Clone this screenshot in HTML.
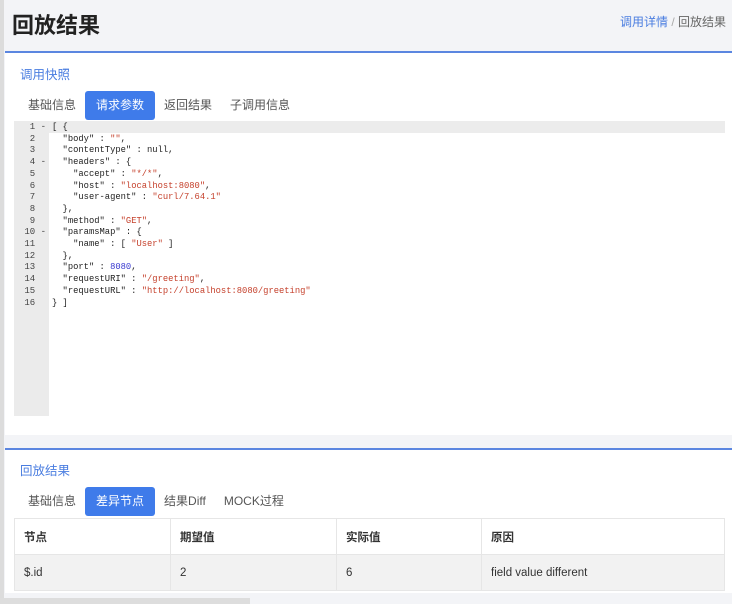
<!DOCTYPE html>
<html><head><meta charset="utf-8"><style>
*{margin:0;padding:0;box-sizing:border-box}
body{width:732px;height:604px;background:#f3f4f7;font-family:"Liberation Sans","Noto Sans CJK SC",sans-serif;position:relative;overflow:hidden;color:#333}
.lstrip{position:absolute;left:0;top:0;width:4px;height:604px;background:#dcdcdc}
h1{position:absolute;left:12px;top:8px;font-size:22px;font-weight:600;color:#222}
.bc{position:absolute;right:6px;top:13px;font-size:12px;color:#666}
.bc a{color:#4a7de0}
.card{position:absolute;left:5px;right:0;background:#fff;border-top:2px solid #5b86e0}
.title{position:absolute;left:15px;font-size:12.5px;color:#4a7de0}
.tabs{position:absolute;left:11px;font-size:12px;color:#555;display:flex;align-items:center}
.tabs span{padding:0 9px;height:29px;line-height:29px}
.tabs .on{background:#3f7bea;color:#fff;border-radius:3px;padding:0 11px}
.ed{position:absolute;left:9px;top:68px;width:711px;height:295px;background:#fff;font-family:"Liberation Mono",monospace;font-size:8.8px}
.gut{position:absolute;left:0;top:0;width:35px;height:100%;background:#ebebeb}
.act{position:absolute;left:35px;top:0;right:0;height:12px;background:#ececec}
.ln{position:absolute;left:0;width:32px;text-align:right;color:#444;line-height:11.7px;font-size:9px}
.code{position:absolute;left:38px;top:1px;line-height:11.7px;white-space:pre;color:#222}
.s{color:#c5412c}.n{color:#3a3ad0}
table{position:absolute;left:9px;top:68px;width:711px;border-collapse:collapse;font-size:11.5px}
td{border:1px solid #e6e6e6;padding:0 9px;height:36px}
th{border:1px solid #e6e6e6;padding:0 9px;height:36px;text-align:left;font-weight:600}
tr.g td{background:#f2f2f2}
</style></head><body>
<div class="lstrip"></div>
<h1>回放结果</h1>
<div class="bc"><a>调用详情</a> <span style="color:#aaa">/</span> 回放结果</div>
<div class="card" style="top:51px;height:384px">
<div class="title" style="top:11px">调用快照</div>
<div class="tabs" style="top:38px;left:14px"><span>基础信息</span><span class="on">请求参数</span><span>返回结果</span><span>子调用信息</span></div>
<div class="ed"><div class="gut"></div><div class="act"></div>
<div class="ln" style="top:1px">1 -<br>2&nbsp;&nbsp;<br>3&nbsp;&nbsp;<br>4 -<br>5&nbsp;&nbsp;<br>6&nbsp;&nbsp;<br>7&nbsp;&nbsp;<br>8&nbsp;&nbsp;<br>9&nbsp;&nbsp;<br>10 -<br>11&nbsp;&nbsp;<br>12&nbsp;&nbsp;<br>13&nbsp;&nbsp;<br>14&nbsp;&nbsp;<br>15&nbsp;&nbsp;<br>16&nbsp;&nbsp;</div>
<div class="code">[ {
  "body" : <span class="s">""</span>,
  "contentType" : null,
  "headers" : {
    "accept" : <span class="s">"*/*"</span>,
    "host" : <span class="s">"localhost:8080"</span>,
    "user-agent" : <span class="s">"curl/7.64.1"</span>
  },
  "method" : <span class="s">"GET"</span>,
  "paramsMap" : {
    "name" : [ <span class="s">"User"</span> ]
  },
  "port" : <span class="n">8080</span>,
  "requestURI" : <span class="s">"/greeting"</span>,
  "requestURL" : <span class="s">"http://localhost:8080/greeting"</span>
} ]</div></div>
</div>
<div class="card" style="top:448px;height:145px">
<div class="title" style="top:10px">回放结果</div>
<div class="tabs" style="top:37px;left:14px"><span>基础信息</span><span class="on">差异节点</span><span>结果Diff</span><span>MOCK过程</span></div>
<table style="top:68px"><tr><th style="width:156px">节点</th><th style="width:166px">期望值</th><th style="width:145px">实际值</th><th>原因</th></tr>
<tr class="g"><td>$.id</td><td>2</td><td>6</td><td>field value different</td></tr></table>
</div>
<div style="position:absolute;left:0;top:598px;width:250px;height:6px;background:#ddd"></div>
</body></html>
